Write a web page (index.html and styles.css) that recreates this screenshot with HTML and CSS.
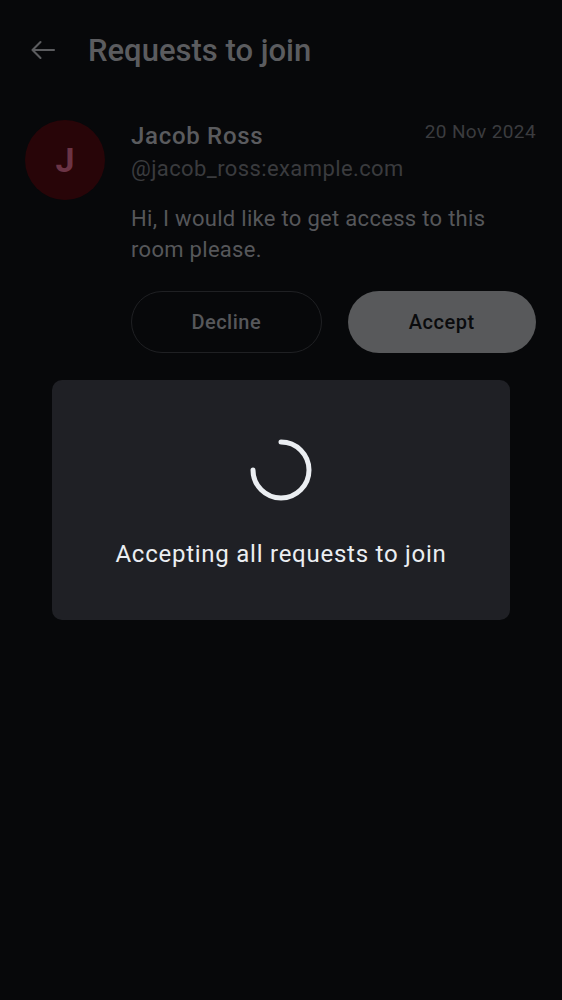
FILE: index.html
```html
<!DOCTYPE html>
<html>
<head>
<meta charset="utf-8">
<link rel="stylesheet" href="styles.css">
</head>
<body>
<div class="screen">
  <header class="topbar">
    <svg class="back" width="26" height="24" viewBox="0 0 26 24"><path d="M24 12H2.5M10.5 4L2.5 12L10.5 20" fill="none" stroke="#5b5c5f" stroke-width="2.1" stroke-linecap="round" stroke-linejoin="round"/></svg>
    <h1 class="title">Requests to join</h1>
  </header>
  <section class="request">
    <div class="avatar">J</div>
    <div class="body">
      <div class="head">
        <div class="name">Jacob Ross</div>
        <div class="date">20 Nov 2024</div>
      </div>
      <div class="handle">@jacob_ross:example.com</div>
      <p class="msg">Hi, I would like to get access to this room please.</p>
      <div class="actions">
        <button class="btn decline">Decline</button>
        <button class="btn accept">Accept</button>
      </div>
    </div>
  </section>
  <div class="dialog">
    <svg class="spinner" width="64" height="64" viewBox="0 0 64 64"><path d="M32 4 A28 28 0 1 1 4 32" fill="none" stroke="#ebeef2" stroke-width="5" stroke-linecap="round"/></svg>
    <div class="dialog-text">Accepting all requests to join</div>
  </div>
</div>
</body>
</html>
```
FILE: styles.css
```css
html, body {
  margin: 0;
  padding: 0;
  background: #07080a;
}
.screen {
  width: 562px;
  height: 1000px;
  position: relative;
  font-family: Roboto, "Noto Sans", sans-serif;
  background: #07080a;
  overflow: hidden;
}
.topbar {
  display: flex;
  align-items: center;
  height: 100px;
  padding-left: 30px;
}
.back { margin-right: 32px; }
.title {
  margin: 0;
  font-size: 31px;
  font-weight: 500;
  color: #5b5c5f;
  letter-spacing: 0;
}
.request {
  display: flex;
  padding: 20px 26px 0 25px;
}
.avatar {
  width: 80px;
  height: 80px;
  border-radius: 50%;
  background: #280508;
  color: #6b3445;
  font-size: 34px;
  font-weight: 700;
  display: flex;
  align-items: center;
  justify-content: center;
  flex: none;
  margin-right: 26px;
}
.body { flex: 1; }
.head {
  display: flex;
  justify-content: space-between;
  align-items: flex-start;
}
.name {
  font-size: 24px;
  font-weight: 500;
  color: #5a5b5e;
  line-height: 32px;
  letter-spacing: 0.7px;
}
.date {
  font-size: 19px;
  color: #3b3c3f;
  letter-spacing: 0.4px;
  line-height: 24px;
}
.handle {
  font-size: 22px;
  color: #3a3b3e;
  line-height: 32px;
  margin-top: 1px;
  letter-spacing: 0.4px;
}
.msg {
  margin: 18px 0 0;
  font-size: 22px;
  line-height: 31px;
  color: #56575a;
  letter-spacing: 0.3px;
}
.actions {
  display: flex;
  gap: 26px;
  margin-top: 26px;
}
.btn {
  flex: 1;
  height: 62px;
  border-radius: 31px;
  font-family: inherit;
  font-size: 20px;
  font-weight: 500;
  letter-spacing: 0.5px;
}
.decline {
  background: transparent;
  border: 1px solid #1f2023;
  color: #56575a;
}
.accept {
  background: #58595b;
  border: none;
  color: #0a0b0d;
}
.dialog {
  position: absolute;
  left: 52px;
  top: 380px;
  width: 458px;
  height: 240px;
  background: #1f2025;
  border-radius: 10px;
  display: flex;
  flex-direction: column;
  align-items: center;
}
.spinner { margin-top: 58px; }
.dialog-text {
  margin-top: 38px;
  font-size: 24px;
  line-height: 28px;
  color: #ebeef2;
  letter-spacing: 0.75px;
}
```
